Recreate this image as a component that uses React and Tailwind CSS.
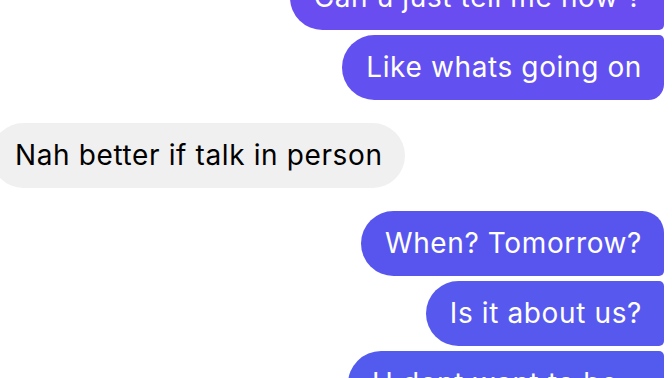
const messages = [
  { id: 1, mine: true, text: "Can u just tell me now ?", color: "bg-[#6a4df0]", shape: "rounded-l-[33px] rounded-tr-[16px] rounded-br-[5px]" },
  { id: 2, mine: true, text: "Like whats going on", color: "bg-[#6250f0]", shape: "rounded-l-[33px] rounded-tr-[5px] rounded-br-[16px]", gap: "mt-[5px]" },
  { id: 3, mine: false, text: "Nah better if talk in person", gap: "mt-[23px]" },
  { id: 4, mine: true, text: "When? Tomorrow?", color: "bg-[#5855ee]", shape: "rounded-l-[33px] rounded-tr-[22px] rounded-br-[5px]", gap: "mt-[23px]" },
  { id: 5, mine: true, text: "Is it about us?", color: "bg-[#5658ee]", shape: "rounded-l-[33px] rounded-r-[5px]", gap: "mt-[5px]" },
  { id: 6, mine: true, text: ["U dont want to be", "with me anymore?"], color: "bg-[#535bee]", shape: "rounded-l-[33px] rounded-r-[5px] w-[316px]", gap: "mt-[5px]" },
];

function Bubble({ msg }) {
  const lines = Array.isArray(msg.text) ? msg.text : [msg.text];
  if (!msg.mine) {
    return (
      <div className={`self-start -ml-[9px] ${msg.gap || ""}`}>
        <div className="bg-[#f0f0f0] text-black rounded-[33px] pl-[24px] pr-[22px] py-[16px] leading-[33px]">
          {lines[0]}
        </div>
      </div>
    );
  }
  return (
    <div className={`self-end ${msg.gap || ""}`}>
      <div className={`${msg.color} ${msg.shape} text-white pl-[24px] pr-[22px] py-[16px] leading-[33px]`}>
        {lines.map((l, i) => (
          <div key={i}>{l}</div>
        ))}
      </div>
    </div>
  );
}

export default function App() {
  return (
    <div className="w-[672px] h-[378px] overflow-hidden bg-white" style={{ fontFamily: "Inter, 'Liberation Sans', sans-serif" }}>
      <div className="flex flex-col pr-[8px] -mt-[35px] text-[28px] tracking-[0.62px]">
        {messages.map((m) => (
          <Bubble key={m.id} msg={m} />
        ))}
      </div>
    </div>
  );
}
